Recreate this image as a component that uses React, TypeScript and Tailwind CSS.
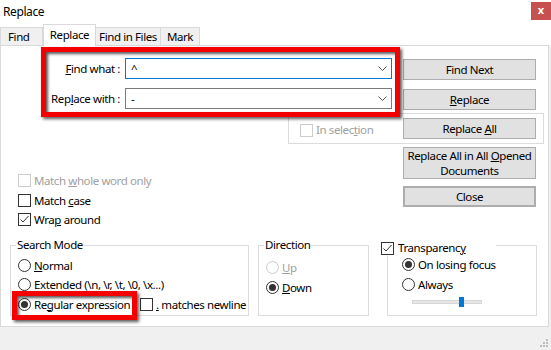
import React from 'react'

const FONT = "font-['Noto_Sans','DejaVu_Sans',sans-serif]"

function Checkbox({ checked = false, disabled = false }: { checked?: boolean; disabled?: boolean }) {
  return (
    <span
      className={`flex h-[13px] w-[13px] shrink-0 items-center justify-center border bg-white ${
        disabled ? 'border-[#cccccc]' : 'border-[#333333]'
      }`}
    >
      {checked && (
        <svg width="11" height="11" viewBox="0 0 11 11" aria-hidden="true">
          <path d="M1.5 5.5 L4 8 L9.5 2" fill="none" stroke="#333333" strokeWidth="1" />
        </svg>
      )}
    </span>
  )
}

function Radio({ checked = false, disabled = false }: { checked?: boolean; disabled?: boolean }) {
  return (
    <span
      className={`flex h-[13px] w-[13px] shrink-0 items-center justify-center rounded-full border bg-white ${
        disabled ? 'border-[#cccccc]' : 'border-[#333333]'
      }`}
    >
      {checked && <span className="h-[7px] w-[7px] rounded-full bg-[#333333]" />}
    </span>
  )
}

function Chevron() {
  return (
    <svg width="9" height="5" viewBox="0 0 9 5" className="ml-auto mr-[4px] shrink-0" aria-hidden="true">
      <path d="M0.5 0.5 L4.5 4.5 L8.5 0.5" fill="none" stroke="#555555" strokeWidth="1" />
    </svg>
  )
}

function Button({ children, className = '' }: { children: React.ReactNode; className?: string }) {
  return (
    <div
      className={`flex w-[133px] items-center justify-center border border-[#adadad] bg-[#e1e1e1] text-center leading-[15px] ${className}`}
    >
      {children}
    </div>
  )
}

function Group({
  title,
  className = '',
  children,
}: {
  title?: React.ReactNode
  className?: string
  children: React.ReactNode
}) {
  return (
    <div className={`relative h-[71px] border border-[#dcdcdc] ${className}`}>
      {title && <span className="absolute -top-[9px] left-[5px] bg-white px-[1px] leading-[16px]">{title}</span>}
      {children}
    </div>
  )
}

const RED_BOX =
  'pointer-events-none absolute border-[5px] border-[#f40000] shadow-[2px_2px_3px_rgba(0,0,0,0.65),inset_2px_2px_3px_rgba(0,0,0,0.65)]'

export default function App() {
  return (
    <div
      className={`relative h-[350px] w-[551px] overflow-hidden whitespace-nowrap bg-[#f0f0f0] text-[11.5px] leading-[16px] tracking-[-0.4px] text-black ${FONT}`}
    >
      {/* title bar */}
      <div className="flex h-[24px] items-start justify-between bg-white">
        <span className="ml-[3px] mt-[4px] text-[12px]">Replace</span>
        <div className="mt-[2px] flex h-[18px] w-[20px] items-center justify-center bg-[#c75050] pb-[2px] text-[11px] font-bold tracking-normal text-white">
          x
        </div>
      </div>

      {/* tabs */}
      <div className="flex h-[21px] items-end bg-white">
        <div className="flex h-[18px] w-[43px] items-center border border-b-0 border-[#d9d9d9] bg-[#f0f0f0] pl-[7px]">Find</div>
        <div className="relative z-10 -mb-px flex h-[22px] w-[53px] items-start justify-center border border-b-0 border-[#d9d9d9] bg-white pt-[2px]">
          Replace
        </div>
        <div className="flex h-[18px] w-[65px] items-center justify-center border border-b-0 border-l-0 border-[#d9d9d9] bg-[#f0f0f0]">
          Find in Files
        </div>
        <div className="flex h-[18px] w-[39px] items-center justify-center border border-b-0 border-l-0 border-[#d9d9d9] bg-[#f0f0f0]">
          Mark
        </div>
      </div>

      {/* tab panel */}
      <div className="relative h-[282px] w-[549px] border border-[#d9d9d9] bg-white">
        <div className="mt-[12px] flex items-start">
          <div className="flex h-[21px] w-[119px] items-center justify-end">
            <span>
              <u>F</u>ind what :
            </span>
          </div>
          <div className="ml-[5px] flex h-[21px] w-[267px] items-center border border-[#0078d7] pl-[5px]">
            <span>^</span>
            <Chevron />
          </div>
          <Button className="ml-[11px] mt-px h-[21px]">Find Next</Button>
        </div>

        <div className="mt-[8px] flex items-start">
          <div className="flex h-[21px] w-[119px] items-center justify-end">
            <span>
              Rep<u>l</u>ace with :
            </span>
          </div>
          <div className="ml-[5px] flex h-[21px] w-[267px] items-center border border-[#7a7a7a] pl-[5px]">
            <span>-</span>
            <Chevron />
          </div>
          <Button className="ml-[11px] mt-px h-[21px]">
            <span>
              <u>R</u>eplace
            </span>
          </Button>
        </div>

        <div className="ml-[287px] mt-[3px] flex h-[31px] w-[256px] items-start border border-[#dcdcdc]">
          <div className="flex w-[114px] items-center gap-[3px] pl-[11px] pt-[8px] text-[#a0a0a0]">
            <Checkbox disabled />
            <span>
              In selec<u>t</u>ion
            </span>
          </div>
          <Button className="mt-[4px] h-[21px]">
            <span>
              Replace <u>A</u>ll
            </span>
          </Button>
        </div>

        <div className="mt-[3px] flex h-[98px] items-start">
          <div className="ml-[17px] flex w-[385px] flex-col pt-[27px]">
            <div className="flex h-[13px] items-center gap-[3px] text-[#a0a0a0]">
              <Checkbox disabled />
              <span>
                Match <u>w</u>hole word only
              </span>
            </div>
            <div className="mt-[7px] flex h-[13px] items-center gap-[3px]">
              <Checkbox />
              <span>
                Match <u>c</u>ase
              </span>
            </div>
            <div className="mt-[6px] flex h-[13px] items-center gap-[3px]">
              <Checkbox checked />
              <span>
                Wra<u>p</u> around
              </span>
            </div>
          </div>
          <div className="flex flex-col">
            <Button className="h-[32px]">
              <span>
                Replace All in All <u>O</u>pened
                <br />
                Documents
              </span>
            </Button>
            <Button className="mt-[7px] h-[21px] border-2 border-[#0078d7]">Close</Button>
          </div>
        </div>

        <div className="flex items-start">
          <Group title="Search Mode" className="ml-[9px] w-[239px]">
            <div className="flex flex-col pl-[7px] pt-[13px]">
              <div className="flex h-[13px] items-center gap-[3px]">
                <Radio />
                <span>
                  <u>N</u>ormal
                </span>
              </div>
              <div className="mt-[6px] flex h-[13px] items-center gap-[3px]">
                <Radio />
                <span>Extended (\n, \r, \t, \0, \x...)</span>
              </div>
              <div className="mt-[7px] flex h-[13px] items-center">
                <Radio checked />
                <span className="ml-[3px] w-[106px]">
                  Re<u>g</u>ular expression
                </span>
                <span className="flex items-center gap-[3px]">
                  <Checkbox />
                  <span>
                    <u>.</u> matches newline
                  </span>
                </span>
              </div>
            </div>
            <div className={`${RED_BOX} left-[1px] top-[45px] h-[29px] w-[125px]`} />
          </Group>

          <Group title="Direction" className="ml-[9px] w-[111px]">
            <div className="flex flex-col pl-[7px] pt-[15px]">
              <div className="flex h-[13px] items-center gap-[3px] text-[#a0a0a0]">
                <Radio disabled />
                <span>
                  <u>U</u>p
                </span>
              </div>
              <div className="mt-[7px] flex h-[13px] items-center gap-[3px]">
                <Radio checked />
                <span>
                  <u>D</u>own
                </span>
              </div>
            </div>
          </Group>

          <Group className="ml-[18px] w-[150px]">
            <div className="absolute -left-[7px] -top-[6px] flex h-[16px] w-[115px] items-center gap-[4px] bg-white">
              <Checkbox checked />
              <span>
                Transparenc<u>y</u>
              </span>
            </div>
            <div className="flex flex-col pl-[14px] pt-[12px]">
              <div className="flex h-[13px] items-center gap-[3px]">
                <Radio checked />
                <span>On losing focus</span>
              </div>
              <div className="mt-[7px] flex h-[13px] items-center gap-[3px]">
                <Radio />
                <span>Always</span>
              </div>
              <div className="relative ml-[10px] mt-[6px] h-[10px] w-[70px]">
                <div className="absolute left-0 top-[3px] h-[4px] w-[70px] border border-[#d6d6d6] bg-[#e7e7e7]" />
                <div className="absolute left-[47px] top-0 h-[10px] w-[5px] bg-[#0078d7]" />
              </div>
            </div>
          </Group>
        </div>

        {/* highlight around the two inputs */}
        <div className={`${RED_BOX} left-[40px] top-px h-[70px] w-[359px]`} />
      </div>

      {/* size grip */}
      <svg width="10" height="10" viewBox="0 0 10 10" className="absolute bottom-[2px] right-[2px]" aria-hidden="true">
        <rect x="7" y="1" width="2" height="2" fill="#bcbcbc" />
        <rect x="4" y="4" width="2" height="2" fill="#bcbcbc" />
        <rect x="7" y="4" width="2" height="2" fill="#bcbcbc" />
        <rect x="1" y="7" width="2" height="2" fill="#bcbcbc" />
        <rect x="4" y="7" width="2" height="2" fill="#bcbcbc" />
        <rect x="7" y="7" width="2" height="2" fill="#bcbcbc" />
      </svg>
    </div>
  )
}
